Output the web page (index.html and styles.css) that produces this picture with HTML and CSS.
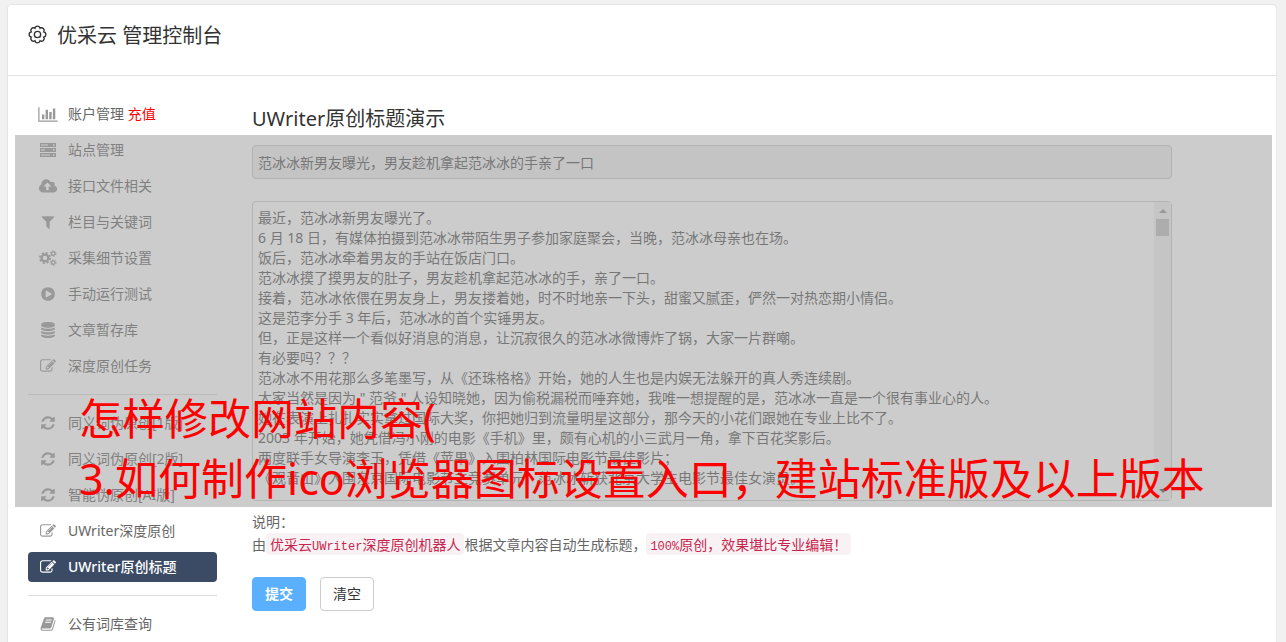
FILE: index.html
```html
<!DOCTYPE html>
<html lang="zh-CN">

<head>
    <meta charset="UTF-8">
    <meta name="viewport" content="width=device-width, initial-scale=1.0">
    <title>优采云 管理控制台</title>
    <link rel="stylesheet" href="styles.css">
</head>

<body>
    <!-- shared icons -->
    <svg class="icon-defs" width="0" height="0" aria-hidden="true">
        <symbol id="icon-edit" viewBox="0 0 1792 1792">
            <path d="M888 1184l116-116-152-152-116 116v56h96v96h56zm440-720q-16-16-33 1l-350 350q-17 17-1 33t33-1l350-350q17-17 1-33zm80 594v190q0 119-84.5 203.5t-203.5 84.5h-832q-119 0-203.5-84.5t-84.5-203.5v-832q0-119 84.5-203.5t203.5-84.5h832q63 0 117 25 15 7 18 23 3 17-9 29l-49 49q-14 14-32 8-23-6-45-6h-832q-66 0-113 47t-47 113v832q0 66 47 113t113 47h832q66 0 113-47t47-113v-126q0-13 9-22l64-64q15-15 35-7t20 29zm-96-738l288 288-672 672h-288v-288zm444 132l-92 92-288-288 92-92q28-28 68-28t68 28l152 152q28 28 28 68t-28 68z"/>
        </symbol>
        <symbol id="icon-refresh" viewBox="0 0 1792 1792">
            <path d="M1639 1056q0 5-1 7-64 268-268 434.5t-478 166.5q-146 0-282.5-55t-243.5-157l-129 129q-19 19-45 19t-45-19-19-45v-448q0-26 19-45t45-19h448q26 0 45 19t19 45-19 45l-137 137q71 66 161 102t187 36q134 0 250-65t186-179q11-17 53-117 8-23 30-23h192q13 0 22.5 9.5t9.5 22.5zm25-800v448q0 26-19 45t-45 19h-448q-26 0-45-19t-19-45 19-45l138-138q-148-137-349-137-134 0-250 65t-186 179q-11 17-53 117-8 23-30 23h-199q-13 0-22.5-9.5t-9.5-22.5v-7q65-268 270-434.5t480-166.5q146 0 284 55.5t245 156.5l130-129q19-19 45-19t45 19 19 45z"/>
        </symbol>
    </svg>

    <div class="panel">
        <header class="panel-header">
            <svg class="gear" viewBox="0 0 18 18" aria-hidden="true">
                <path d="M14.91 6.55a2.500 2.500 0 0 1 0 4.900a2.500 2.500 0 0 1-3.460 3.460a2.500 2.500 0 0 1-4.900 0a2.500 2.500 0 0 1-3.460-3.460a2.500 2.500 0 0 1 0-4.900a2.500 2.500 0 0 1 3.460-3.460a2.500 2.500 0 0 1 4.900 0a2.500 2.500 0 0 1 3.460 3.460z"/>
                <circle cx="9" cy="9" r="3"/>
            </svg>
            <h1>优采云 管理控制台</h1>
        </header>

        <div class="panel-body">
            <nav class="sidebar">
                <a class="menu-item" href="#">
                    <svg class="icon wide" viewBox="0 0 2048 1792"><path d="M640 896v512h-256v-512h256zm384-512v1024h-256v-1024h256zm1024 1152v128h-2048v-1536h128v1408h1920zm-640-896v768h-256v-768h256zm384-384v1152h-256v-1152h256z"/></svg>
                    <span>账户管理 <span class="recharge">充值</span></span>
                </a>
                <a class="menu-item" href="#">
                    <svg class="icon" viewBox="0 0 16 16"><path fill-rule="evenodd" d="M0 1h16v4H0zM1 2.500v1h7v-1zM13 2.200h1.500v1.500H13zM0 6h16v4H0zM1 7.500v1h4v-1zM13 7.200h1.500v1.500H13zM0 11h16v4H0zM1 12.500v1h9v-1zM13 12.200h1.500v1.500H13z"/></svg>
                    <span>站点管理</span>
                </a>
                <a class="menu-item" href="#">
                    <svg class="icon wide" viewBox="0 0 1920 1792"><path d="M1280 864q0-14-9-23l-352-352q-9-9-23-9t-23 9l-351 351q-10 12-10 24 0 14 9 23t23 9h224v352q0 13 9.5 22.5t22.5 9.5h192q13 0 22.5-9.5t9.5-22.5v-352h224q13 0 22.5-9.5t9.5-22.5zm640 288q0 159-112.5 271.5t-271.5 112.5h-1088q-185 0-316.5-131.5t-131.5-316.5q0-130 70-240t188-165q-2-30-2-43 0-212 150-362t362-150q156 0 285.5 87t188.5 231q71-62 166-62 106 0 181 75t75 181q0 76-41 138 130 31 213.5 135.5t83.5 238.5z"/></svg>
                    <span>接口文件相关</span>
                </a>
                <a class="menu-item" href="#">
                    <svg class="icon" viewBox="0 0 1792 1792"><path d="M1595 295q17 41-14 70l-493 493v742q0 42-39 59-13 5-25 5-27 0-45-19l-256-256q-19-19-19-45v-486l-493-493q-31-29-14-70 17-39 59-39h1280q42 0 59 39z"/></svg>
                    <span>栏目与关键词</span>
                </a>
                <a class="menu-item" href="#">
                    <svg class="icon cogs" viewBox="0 0 18 16">
                        <circle cx="6" cy="8" r="3.400" stroke-width="2.400"/>
                        <circle cx="6" cy="8" r="5.200" stroke-width="1.600" stroke-dasharray="2.100 1.984"/>
                        <circle cx="14.200" cy="3.600" r="1.800" stroke-width="1.300"/>
                        <circle cx="14.200" cy="3.600" r="2.800" stroke-width="1" stroke-dasharray="1.500 1.432"/>
                        <circle cx="14.200" cy="12.600" r="1.800" stroke-width="1.300"/>
                        <circle cx="14.200" cy="12.600" r="2.800" stroke-width="1" stroke-dasharray="1.500 1.432"/>
                    </svg>
                    <span>采集细节设置</span>
                </a>
                <a class="menu-item" href="#">
                    <svg class="icon" viewBox="0 0 1792 1792"><path d="M896 128q209 0 385.500 103t279.500 279.500 103 385.500-103 385.500-279.500 279.500-385.500 103-385.500-103-279.500-279.500-103-385.500 103-385.500 279.500-279.500 385.500-103zm384 823q32-18 32-55t-32-55l-544-320q-31-19-64-1-32 19-32 56v640q0 37 32 56 16 8 32 8 17 0 32-9z"/></svg>
                    <span>手动运行测试</span>
                </a>
                <a class="menu-item" href="#">
                    <svg class="icon" viewBox="0 0 1792 1792"><path d="M896 768q237 0 443-43t325-127v170q0 69-103 128t-280 93.500-385 34.500-385-34.500-280-93.500-103-128v-170q119 84 325 127t443 43zm0 768q237 0 443-43t325-127v170q0 69-103 128t-280 93.500-385 34.500-385-34.500-280-93.500-103-128v-170q119 84 325 127t443 43zm0-384q237 0 443-43t325-127v170q0 69-103 128t-280 93.500-385 34.500-385-34.500-280-93.500-103-128v-170q119 84 325 127t443 43zm0-1152q208 0 385 34.500t280 93.500 103 128v128q0 69-103 128t-280 93.500-385 34.500-385-34.500-280-93.500-103-128v-128q0-69 103-128t280-93.500 385-34.500z"/></svg>
                    <span>文章暂存库</span>
                </a>
                <a class="menu-item" href="#">
                    <svg class="icon"><use href="#icon-edit"/></svg>
                    <span>深度原创任务</span>
                </a>
                <hr>
                <a class="menu-item" href="#">
                    <svg class="icon"><use href="#icon-refresh"/></svg>
                    <span>同义词伪原创[1版]</span>
                </a>
                <a class="menu-item" href="#">
                    <svg class="icon"><use href="#icon-refresh"/></svg>
                    <span>同义词伪原创[2版]</span>
                </a>
                <a class="menu-item" href="#">
                    <svg class="icon"><use href="#icon-refresh"/></svg>
                    <span>智能伪原创[AI版]</span>
                </a>
                <a class="menu-item" href="#">
                    <svg class="icon"><use href="#icon-edit"/></svg>
                    <span>UWriter深度原创</span>
                </a>
                <a class="menu-item active" href="#">
                    <svg class="icon"><use href="#icon-edit"/></svg>
                    <span>UWriter原创标题</span>
                </a>
                <hr>
                <a class="menu-item" href="#">
                    <svg class="icon" viewBox="0 0 1792 1792"><path d="M1703 478q40 57 18 129l-275 906q-19 64-76.500 107.500t-122.500 43.500h-923q-77 0-148.500-53.500t-99.500-131.500q-24-67-2-127 0-4 3-27t4-37q1-8-3-21.500t-3-19.500q2-11 8-21t16.500-23.500 16.500-23.500q23-38 45-91.500t30-91.500q3-10 .5-30t-.5-28q3-11 17-28t17-23q21-36 42-92t25-90q1-9-2.500-32t.5-28q4-13 22-30.500t22-22.500q19-26 42.500-84.500t27.500-96.500q1-8-3-25.500t-2-26.500q2-8 9-18t18-23 17-21q8-12 16.500-30.500t15-35 16-36 19.500-32 26.500-23.500 36-11.500 47.500 5.500l-1 3q38-9 51-9h761q74 0 114 56t18 130l-274 906q-36 119-71.500 153.500t-128.500 34.500h-869q-27 0-38 15-11 16-1 43 24 70 144 70h923q29 0 56-15.500t35-41.500l300-987q7-22 5-57 38 15 59 43zm-1064 2q-4 13 2 22.500t20 9.500h608q13 0 25.500-9.500t16.500-22.500l21-64q4-13-2-22.500t-20-9.500h-608q-13 0-25.500 9.500t-16.500 22.500zm-83 256q-4 13 2 22.500t20 9.500h608q13 0 25.500-9.500t16.500-22.500l21-64q4-13-2-22.500t-20-9.500h-608q-13 0-25.500 9.500t-16.500 22.500z"/></svg>
                    <span>公有词库查询</span>
                </a>
            </nav>

            <main class="content">
                <form>
                    <h2><label for="title">UWriter原创标题演示</label></h2>
                    <input type="text" id="title" name="title" class="form-control" value="范冰冰新男友曝光，男友趁机拿起范冰冰的手亲了一口" readonly>
                    <div class="article">
                        <textarea id="article" name="article" class="form-control" aria-label="文章内容">最近，范冰冰新男友曝光了。
6 月 18 日，有媒体拍摄到范冰冰带陌生男子参加家庭聚会，当晚，范冰冰母亲也在场。
饭后，范冰冰牵着男友的手站在饭店门口。
范冰冰摸了摸男友的肚子，男友趁机拿起范冰冰的手，亲了一口。
接着，范冰冰依偎在男友身上，男友搂着她，时不时地亲一下头，甜蜜又腻歪，俨然一对热恋期小情侣。
这是范李分手 3 年后，范冰冰的首个实锤男友。
但，正是这样一个看似好消息的消息，让沉寂很久的范冰冰微博炸了锅，大家一片群嘲。
有必要吗？？？
范冰冰不用花那么多笔墨写，从《还珠格格》开始，她的人生也是内娱无法躲开的真人秀连续剧。
大家当然是因为 " 范爷 " 人设知晓她，因为偷税漏税而唾弃她，我唯一想提醒的是，范冰冰一直是一个很有事业心的人。
她在表演上扎扎实实拿过国际大奖，你把她归到流量明星这部分，那今天的小花们跟她在专业上比不了。
2003 年开始，她凭借冯小刚的电影《手机》里，颇有心机的小三武月一角，拿下百花奖影后。
两度联手女导演李玉，凭借《苹果》入围柏林国际电影节最佳影片；
《观音山》入围东京国际电影节主竞赛单元，范冰冰斩获北京大学生电影节最佳女演员。</textarea>
                        <div class="scrollbar">
                            <span class="arrow-up"></span>
                            <span class="thumb"></span>
                            <span class="arrow-down"></span>
                        </div>
                    </div>
                    <p class="help">说明：<br>由<code>优采云<span>UWriter</span>深度原创机器人</code>根据文章内容自动生成标题，<code><span>100%</span>原创，效果堪比专业编辑！</code></p>
                    <div class="buttons">
                        <button type="submit" class="btn btn-primary">提交</button>
                        <button type="reset" class="btn">清空</button>
                    </div>
                </form>
            </main>
        </div>

        <div class="caption">
            <p>怎样修改网站内容(<br>3.如何制作ico浏览器图标设置入口，建站标准版及以上版本</p>
        </div>
    </div>
</body>

</html>
```
FILE: styles.css
```css
* {
    box-sizing: border-box;
}

body {
    margin: 0;
    padding: 5px 10px 0 8px;
    height: 100vh;
    overflow: hidden;
    background-color: #f1f1f1;
    font-family: "Noto Sans", "Noto Sans CJK SC", sans-serif;
    font-size: 14px;
    line-height: 20px;
    color: #666;
}

.icon-defs {
    position: absolute;
}

.panel {
    position: relative;
    min-height: 100vh;
    background: #fff;
    border-radius: 4px;
    box-shadow: 0 0 0 1px #e5e5e5;
}

.panel-header {
    display: flex;
    align-items: flex-start;
    gap: 10px;
    height: 71px;
    padding: 16px 20px 0;
    border-bottom: 1px solid #e2e2e2;
}

.gear {
    width: 19px;
    height: 19px;
    margin-top: 4px;
    fill: none;
    stroke: #333;
    stroke-width: 1.3;
}

h1,
h2 {
    margin: 0;
    font-size: 20px;
    font-weight: 400;
    line-height: 30px;
    color: #333;
}

.panel-body {
    display: flex;
    gap: 35px;
    padding: 23px 104px 30px 20px;
}

.sidebar {
    display: flex;
    flex-direction: column;
    gap: 6px;
    flex: 0 0 189px;
}

.sidebar hr {
    width: 100%;
    height: 1px;
    margin: 7px 0;
    border: 0;
    background: #ddd;
}

.menu-item {
    display: flex;
    align-items: center;
    gap: 10px;
    height: 30px;
    padding: 0 10px;
    border-radius: 4px;
    color: #666;
    text-decoration: none;
}

.menu-item.active {
    background: #3b4b66;
    color: #fff;
    font-weight: 500;
}

.recharge {
    color: #f00;
}

.icon {
    width: 20px;
    height: 16px;
    fill: #999;
}

.icon.wide {
    height: 17px;
}

.icon.cogs {
    fill: none;
    stroke: #999;
}

.active .icon {
    fill: #fff;
}

.content {
    flex: 1;
    padding-top: 5px;
}

.form-control {
    display: block;
    width: 100%;
    padding: 6px 5px;
    border: 1px solid #ccc;
    border-radius: 4px;
    background: #fff;
    font: inherit;
    color: #555;
}

input.form-control {
    height: 34px;
    margin: 11px 0 22px;
    background: #eee;
}

.article {
    position: relative;
}

textarea.form-control {
    height: 300px;
    resize: none;
    overflow: hidden;
}

.scrollbar {
    position: absolute;
    top: 1px;
    right: 1px;
    bottom: 1px;
    display: flex;
    flex-direction: column;
    align-items: center;
    width: 17px;
    padding: 7px 0;
    background: #f1f1f1;
}

.arrow-up,
.arrow-down {
    border: 4px solid transparent;
}

.arrow-up {
    border-top: 0;
    border-bottom-color: #999;
}

.arrow-down {
    margin-top: auto;
    border-bottom: 0;
    border-top-color: #505050;
}

.thumb {
    width: 13px;
    height: 17px;
    margin-top: 6px;
    background: #c1c1c1;
}

.help {
    margin: 9px 0 20px;
    line-height: 23px;
}

code {
    padding: 1px 4px;
    border-radius: 4px;
    background: #f9f2f4;
    color: #c7254e;
    font-family: "Noto Sans CJK SC", sans-serif;
    font-size: 14px;
    line-height: 19px;
}

code span {
    font-family: "Liberation Mono", monospace;
    font-size: 12px;
}

.buttons {
    display: flex;
    gap: 14px;
}

.btn {
    width: 54px;
    height: 34px;
    padding: 0;
    border: 1px solid #ccc;
    border-radius: 4px;
    background: #fff;
    font: inherit;
    color: #333;
    cursor: pointer;
}

.btn-primary {
    border-color: #5aafff;
    background: #5aafff;
    color: #fff;
    font-weight: 700;
}

/* grey strip laid over the form */
.caption {
    position: absolute;
    top: 130px;
    left: 7px;
    right: 4px;
    height: 372px;
    padding: 254px 0 0 64px;
    background: rgba(153, 153, 153, 0.5);
}

.caption p {
    margin: 0;
    font-size: 43px;
    line-height: 60px;
    color: #f00;
    white-space: nowrap;
}
```
